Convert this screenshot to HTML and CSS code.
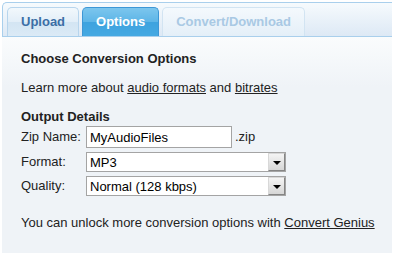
FILE: index.html
```html
<!DOCTYPE html>
<html lang="en">

<head>
    <meta charset="UTF-8">
    <title>Audio Converter Options</title>
    <link rel="stylesheet" href="styles.css">
</head>

<body>
    <div class="converter">
        <ul class="tabs">
            <li class="tab">Upload</li>
            <li class="tab active">Options</li>
            <li class="tab disabled">Convert/Download</li>
        </ul>

        <div class="panel">
            <h2>Choose Conversion Options</h2>
            <p>Learn more about <a href="#">audio formats</a> and <a href="#">bitrates</a></p>

            <h3>Output Details</h3>
            <div class="field">
                <label for="zipName">Zip Name:</label>
                <input type="text" id="zipName" value="MyAudioFiles">
                <span class="suffix">.zip</span>
            </div>
            <div class="field">
                <label for="format">Format:</label>
                <div class="select">
                    <select id="format">
                        <option>MP3</option>
                    </select>
                    <span class="select-btn"></span>
                </div>
            </div>
            <div class="field">
                <label for="quality">Quality:</label>
                <div class="select">
                    <select id="quality">
                        <option>Normal (128 kbps)</option>
                    </select>
                    <span class="select-btn"></span>
                </div>
            </div>

            <p class="note">You can unlock more conversion options with <a href="#">Convert Genius</a></p>
        </div>
    </div>
</body>

</html>
```

FILE: styles.css
```css
body {
    margin: 0;
    padding: 2px;
    background-color: #fff;
    font-family: "Liberation Sans", Arial, sans-serif;
    font-size: 13px;
    line-height: 16px;
    color: #222;
}

.converter {
    width: 390px;
}

.tabs {
    display: flex;
    align-items: flex-end;
    gap: 3px;
    list-style: none;
    margin: 0;
    padding: 3px 0 0 4px;
    height: 30px;
    border: 1px solid #a9cfec;
    border-right: none;
    border-top-left-radius: 5px;
    background: linear-gradient(#f6fafd, #dde9f5);
}

.tab {
    height: 28px;
    line-height: 28px;
    padding: 0 13px;
    border: 1px solid #b7d5ed;
    border-bottom: none;
    border-radius: 5px 5px 0 0;
    font-weight: bold;
    color: #3b6ea6;
    background: linear-gradient(#f2f8fc 0%, #e2eef8 50%, #d3e5f3 51%, #dbeaf6 100%);
}

.tab.active {
    color: #fff;
    border-color: #3d97d6;
    background: linear-gradient(#7cc6ee 0%, #5db5e7 50%, #3ea3df 51%, #45a9e2 100%);
}

.tab.disabled {
    color: #a9c9e4;
    border-color: #d2e4f2;
    background: linear-gradient(#f4f9fd, #e4eff8);
}

.panel {
    padding: 14px 8px 22px 19px;
    background: linear-gradient(#fafcfd, #eff3f7 50px);
}

h2,
h3 {
    margin: 0;
    font-size: 13px;
    font-weight: bold;
}

p {
    margin: 13px 0;
}

a {
    color: #222;
    text-decoration: underline;
}

.field {
    display: flex;
    align-items: center;
    margin-top: 4px;
}

h3 + .field {
    margin-top: 1px;
}

.field label {
    width: 65px;
}

.field input {
    box-sizing: border-box;
    width: 146px;
    height: 22px;
    margin: 0;
    padding: 0 3px;
    border: 1px solid #a4a4a4;
    font-family: inherit;
    font-size: 13px;
    color: #000;
    background: #fff;
}

.suffix {
    margin-left: 3px;
}

.select {
    position: relative;
    width: 200px;
    height: 20px;
}

.select select {
    box-sizing: border-box;
    width: 100%;
    height: 20px;
    margin: 0;
    padding: 0 3px;
    border: 1px solid #a4a4a4;
    border-radius: 0;
    appearance: none;
    font-family: inherit;
    font-size: 13px;
    color: #000;
    background: #fff;
}

.select-btn {
    position: absolute;
    top: 1px;
    right: 1px;
    box-sizing: border-box;
    width: 17px;
    height: 18px;
    border: 1px solid #858585;
    border-top-color: #d8d8d8;
    border-left-color: #d8d8d8;
    background: linear-gradient(#f4f4f4, #d6d6d6);
}

.select-btn::after {
    content: "";
    position: absolute;
    left: 4px;
    top: 7px;
    border-left: 4px solid transparent;
    border-right: 4px solid transparent;
    border-top: 4px solid #000;
}

.note {
    margin: 19px 0 0;
    white-space: nowrap;
}
```
